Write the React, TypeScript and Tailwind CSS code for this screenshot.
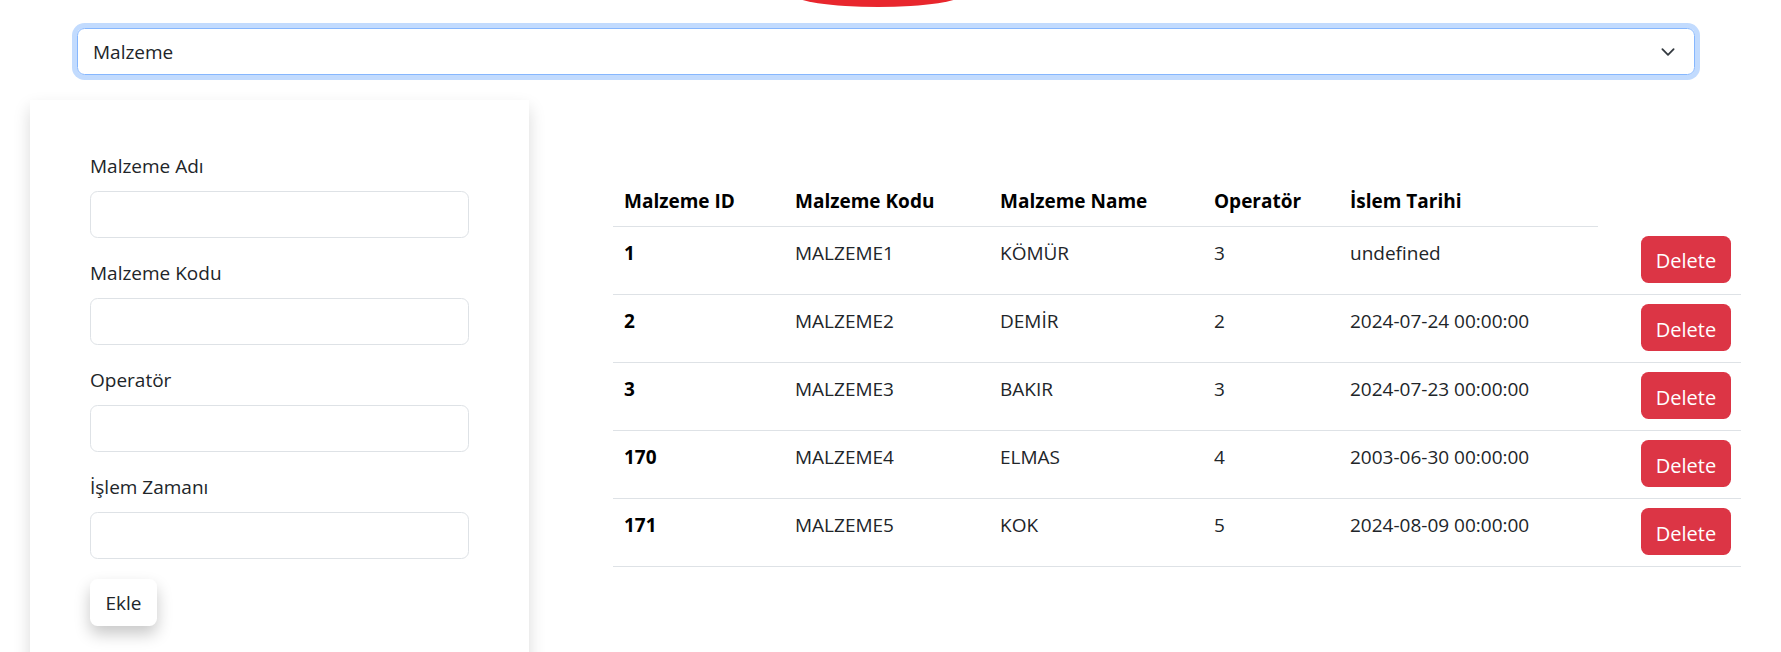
const rows = [
  { id: 1, kod: "MALZEME1", name: "KÖMÜR", op: 3, tarih: "undefined" },
  { id: 2, kod: "MALZEME2", name: "DEMİR", op: 2, tarih: "2024-07-24 00:00:00" },
  { id: 3, kod: "MALZEME3", name: "BAKIR", op: 3, tarih: "2024-07-23 00:00:00" },
  { id: 170, kod: "MALZEME4", name: "ELMAS", op: 4, tarih: "2003-06-30 00:00:00" },
  { id: 171, kod: "MALZEME5", name: "KOK", op: 5, tarih: "2024-08-09 00:00:00" },
];

const fields = ["Malzeme Adı", "Malzeme Kodu", "Operatör", "İşlem Zamanı"];

const headers = ["Malzeme ID", "Malzeme Kodu", "Malzeme Name", "Operatör", "İslem Tarihi"];

export default function App() {
  return (
    <div className="relative min-h-screen overflow-hidden bg-white font-['Open_Sans',sans-serif] text-[19px] leading-[30px] text-[#212529]">
      {/* logo edge peeking in at the top */}
      <div className="absolute left-[793px] top-[-19px] h-[26px] w-[170px] rounded-[50%] bg-[#e8262d]" />

      {/* category select */}
      <div className="pl-[77px] pt-[28px]">
        <div className="flex h-[47px] w-[1618px] items-center justify-between rounded-[7.5px] border border-[#86b7fe] pl-[15px] pr-[17px] shadow-[0_0_0_5px_rgba(13,110,253,0.25)]">
          <span>Malzeme</span>
          <svg width="18" height="18" viewBox="0 0 16 16" fill="none" stroke="#343a40" strokeWidth="1.6" strokeLinecap="round" strokeLinejoin="round">
            <path d="m3 5.5 5 5 5-5" />
          </svg>
        </div>
      </div>

      <div className="mt-[25px] flex items-start">
        {/* form card */}
        <div className="ml-[30px] w-[499px] px-[60px] pb-[90px] pt-[51px] shadow-[0_8px_16px_rgba(0,0,0,0.15)]">
          {fields.map((f) => (
            <div key={f} className="mb-[20px]">
              <label className="mb-[10px] block">{f}</label>
              <input className="block h-[47px] w-full rounded-[7.5px] border border-[#dee2e6] px-[15px] outline-none" />
            </div>
          ))}
          <button className="h-[47px] w-[67px] rounded-[7.5px] bg-white text-[#212529] shadow-[0_8px_16px_rgba(0,0,0,0.22)]">
            Ekle
          </button>
        </div>

        {/* list */}
        <div className="ml-[84px] mt-[75px] w-[1128px]">
          <table className="w-full table-fixed border-collapse">
            <colgroup>
              <col className="w-[171px]" />
              <col className="w-[205px]" />
              <col className="w-[214px]" />
              <col className="w-[136px]" />
              <col className="w-[259px]" />
              <col className="w-[143px]" />
            </colgroup>
            <thead>
              <tr className="h-[51px]">
                {headers.map((h) => (
                  <th key={h} className="border-b border-[#dee2e6] px-[11px] pb-[10px] pt-[11px] text-left font-bold text-black">
                    {h}
                  </th>
                ))}
                <th />
              </tr>
            </thead>
            <tbody>
              {rows.map((r) => (
                <tr key={r.id} className="h-[68px] border-b border-[#dee2e6] align-top">
                  <th className="px-[11px] pt-[11px] text-left font-bold text-black">{r.id}</th>
                  <td className="px-[11px] pt-[11px]">{r.kod}</td>
                  <td className="px-[11px] pt-[11px]">{r.name}</td>
                  <td className="px-[11px] pt-[11px]">{r.op}</td>
                  <td className="px-[11px] pt-[11px]">{r.tarih}</td>
                  <td className="pr-[10px] pt-[9px] text-right">
                    <button className="h-[47px] w-[90px] rounded-[7.5px] bg-[#dc3545] pt-[4px] text-[20px] text-white">Delete</button>
                  </td>
                </tr>
              ))}
            </tbody>
          </table>
        </div>
      </div>
    </div>
  );
}
